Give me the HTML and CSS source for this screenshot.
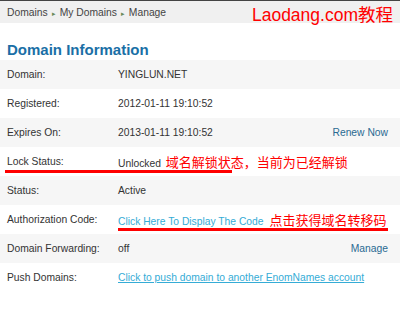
FILE: index.html
```html
<!DOCTYPE html>
<html lang="en">

<head>
  <meta charset="UTF-8">
  <title>Manage Domain</title>
  <link rel="stylesheet" href="styles.css">
</head>

<body>
  <div class="topbar">
    <div class="crumbs">
      <span>Domains</span><span class="sep">&#9656;</span><span>My Domains</span><span class="sep">&#9656;</span><span>Manage</span>
    </div>
    <div class="brand">Laodang.com教程</div>
  </div>

  <h1>Domain Information</h1>

  <div class="info">
    <div class="row">
      <div class="label">Domain:</div>
      <div class="value">YINGLUN.NET</div>
    </div>
    <div class="row">
      <div class="label">Registered:</div>
      <div class="value">2012-01-11 19:10:52</div>
    </div>
    <div class="row">
      <div class="label">Expires On:</div>
      <div class="value">2013-01-11 19:10:52</div>
      <a class="action" href="#">Renew Now</a>
    </div>
    <div class="row">
      <div class="label">Lock Status:</div>
      <div class="value">Unlocked <span class="note">域名解锁状态，当前为已经解锁</span></div>
      <div class="mark mark-lock"></div>
    </div>
    <div class="row">
      <div class="label">Status:</div>
      <div class="value">Active</div>
    </div>
    <div class="row">
      <div class="label">Authorization Code:</div>
      <div class="value"><a class="link plain" href="#">Click Here To Display The Code</a><span class="note">点击获得域名转移码</span></div>
      <div class="mark mark-code"></div>
    </div>
    <div class="row">
      <div class="label">Domain Forwarding:</div>
      <div class="value">off</div>
      <a class="action" href="#">Manage</a>
    </div>
    <div class="row">
      <div class="label">Push Domains:</div>
      <div class="value"><a class="link" href="#">Click to push domain to another EnomNames account</a></div>
    </div>
  </div>
</body>

</html>
```

FILE: styles.css
```css
* {
  box-sizing: border-box;
  margin: 0;
  padding: 0;
}

body {
  background: #fff;
  color: #333;
  font-family: 'Liberation Sans', Arial, 'Noto Sans CJK SC', sans-serif;
  font-size: 10.3px;
  width: 400px;
  height: 310px;
  overflow: hidden;
}

.topbar {
  display: flex;
  justify-content: space-between;
  align-items: center;
  height: 23px;
  background: #f0f0f0;
  border-top: 1px solid #444;
  padding: 0 7px;
}

.crumbs {
  color: #444;
  font-size: 10.3px;
}

.sep {
  color: #6a8a5a;
  font-size: 7px;
  margin: 0 4px;
}

.brand {
  color: #f00;
  font-size: 17.5px;
  font-family: 'Liberation Sans', 'Noto Sans CJK SC', sans-serif;
  padding-top: 2px;
}

h1 {
  color: #1a6fa6;
  font-size: 15px;
  font-weight: bold;
  padding: 18px 7px 1px;
  line-height: 18px;
}

.row {
  position: relative;
  display: flex;
  align-items: center;
  height: 29px;
  padding: 0 12px 0 7px;
}

.row:nth-child(odd) {
  background: #f6f6f6;
}

.label {
  width: 111px;
  flex-shrink: 0;
}

.value {
  flex: 1;
  white-space: nowrap;
}

.action {
  color: #2a6a92;
  text-decoration: none;
}

.link {
  color: #35acd6;
}

.link.plain {
  text-decoration: none;
  margin-right: 4px;
}

.note {
  color: #f00;
  font-size: 13px;
  font-family: 'Noto Sans CJK SC', sans-serif;
  margin-left: 2px;
}

.mark {
  position: absolute;
  height: 3px;
  background: #f00;
  bottom: 3px;
}

.mark-lock {
  left: 5px;
  width: 227px;
}

.mark-code {
  left: 118px;
  width: 270px;
}
```
